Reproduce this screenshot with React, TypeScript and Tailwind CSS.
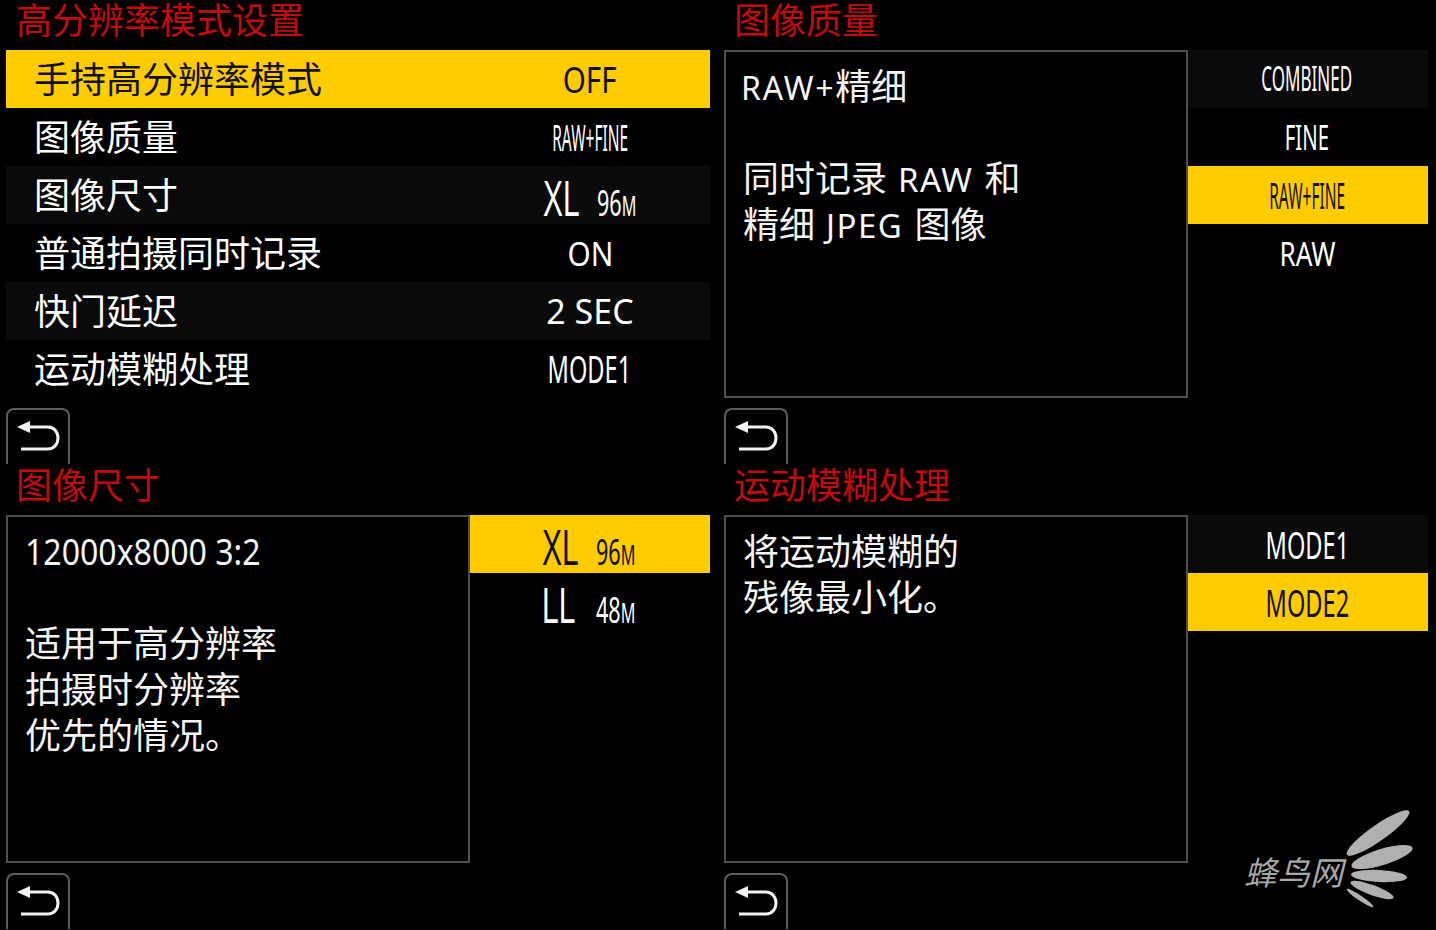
const cjk = "font-['Noto_Sans','Noto_Sans_CJK_SC',sans-serif]";
const titleFont = "font-['Liberation_Sans','Noto_Sans_CJK_SC',sans-serif]";

function BackButton() {
  return (
    <div className="mt-[10px] flex h-[56px] w-[64px] items-start justify-center rounded-t-lg border-2 border-b-0 border-[#5c5c5c] bg-black pt-[9px]">
      <svg width="46" height="34" viewBox="0 0 46 34" fill="none">
        <path d="M2 8 L15 2 L15 14 Z" fill="#f2f2f2" />
        <path d="M13 8 H33 C39 8 43 13 43 19 C43 25 39 30 33 30 H6" stroke="#f2f2f2" strokeWidth="3" />
      </svg>
    </div>
  );
}

// Camera UI text is condensed, so squeeze it horizontally
function Squeezed({ children, className }: { children: React.ReactNode; className: string }) {
  return <span className={`inline-block whitespace-nowrap ${className}`}>{children}</span>;
}

function SizeValue({ big, small }: { big: string; small: string }) {
  return (
    <span className="flex items-baseline justify-center pt-[7px]">
      <Squeezed className="w-[40px] origin-left scale-x-[0.6] font-['Liberation_Sans',sans-serif] text-[50px] leading-none">
        {big}
      </Squeezed>
      <Squeezed className="ml-[14px] w-[40px] origin-left scale-x-[0.6] text-[36px] leading-none">
        {small.slice(0, 2)}
        <span className="text-[27px]">{small.slice(2)}</span>
      </Squeezed>
    </span>
  );
}

type Row = { label: string; value: React.ReactNode };

const rows: Row[] = [
  { label: "手持高分辨率模式", value: <Squeezed className="-translate-y-px scale-x-[0.8] text-[37px]">OFF</Squeezed> },
  { label: "图像质量", value: <Squeezed className="scale-x-[0.43] text-[36px]">RAW+FINE</Squeezed> },
  { label: "图像尺寸", value: <SizeValue big="XL" small="96M" /> },
  { label: "普通拍摄同时记录", value: <Squeezed className="scale-x-[0.9] text-[33px]">ON</Squeezed> },
  { label: "快门延迟", value: <Squeezed className="text-[34px]">2 SEC</Squeezed> },
  { label: "运动模糊处理", value: <Squeezed className="-translate-x-px -translate-y-px scale-x-[0.62] text-[38px]">MODE1</Squeezed> },
];

function SettingsPanel() {
  return (
    <section className="flex h-[465px] w-[704px] flex-col">
      <h2 className={`h-[50px] pl-[10px] text-[36px] leading-[44px] text-[#c40a0a] ${titleFont}`}>高分辨率模式设置</h2>
      <div className="flex flex-col">
        {rows.map((row, i) => (
          <div
            key={row.label}
            className={`flex h-[58px] items-center ${i === 0 ? "bg-[#ffcc00] text-[#111]" : i % 2 === 0 ? "bg-[#0a0a0a] text-white" : "bg-black text-white"}`}
          >
            <span className="w-[504px] pl-[28px] pt-[2px] text-[36px] leading-none">{row.label}</span>
            <span className="flex w-[160px] justify-center pt-[1px]">{row.value}</span>
          </div>
        ))}
      </div>
      <BackButton />
    </section>
  );
}

type Option = { key: string; node: React.ReactNode; active?: boolean; tint?: boolean };

function DetailPanel({ title, lines, options }: { title: string; lines: React.ReactNode[]; options: Option[] }) {
  return (
    <section className="flex h-[465px] w-[704px] flex-col">
      <h2 className={`h-[50px] pl-[10px] text-[36px] leading-[44px] text-[#c40a0a] ${titleFont}`}>{title}</h2>
      <div className="flex h-[348px]">
        <div className="w-[464px] border-2 border-[#4f4f4f] px-[17px] pt-[12px] text-[36px] leading-[46px] text-[#f5f5f5]">
          {lines.map((line, i) => (
            <div key={i} className="h-[46px] whitespace-nowrap">
              {line}
            </div>
          ))}
        </div>
        <div className="flex w-[240px] flex-col">
          {options.map((o) => (
            <div
              key={o.key}
              className={`flex h-[58px] items-center justify-center pr-[2px] ${o.active ? "bg-[#ffcc00] text-[#111]" : o.tint ? "bg-[#0a0a0a] text-white" : "text-white"}`}
            >
              {o.node}
            </div>
          ))}
        </div>
      </div>
      <BackButton />
    </section>
  );
}

function Latin({ children }: { children: React.ReactNode }) {
  return <span className="mx-[11px] text-[33px] tracking-[1.5px]">{children}</span>;
}

function Watermark() {
  const wings = [
    { cx: 1378, cy: 833, rx: 38, ry: 8, r: -35 },
    { cx: 1382, cy: 857, rx: 32, ry: 8, r: -17 },
    { cx: 1379, cy: 876, rx: 28, ry: 6, r: 3 },
    { cx: 1372, cy: 890, rx: 23, ry: 5, r: 20 },
    { cx: 1360, cy: 898, rx: 16, ry: 2.5, r: 34 },
  ];
  return (
    <div className="absolute left-[1230px] top-[800px] h-[130px] w-[206px]">
      <span className="absolute left-[14px] top-[51px] text-[33px] italic leading-[44px] text-[#a8a8a8]">蜂鸟网</span>
      <svg width="206" height="130" viewBox="1230 800 206 130" className="absolute inset-0">
        {wings.map((w) => (
          <ellipse key={w.cy} cx={w.cx} cy={w.cy} rx={w.rx} ry={w.ry} fill="#b0b0b0" transform={`rotate(${w.r} ${w.cx} ${w.cy})`} />
        ))}
      </svg>
    </div>
  );
}

export default function App() {
  return (
    <div className={`relative h-[930px] w-[1436px] overflow-hidden bg-black ${cjk}`}>
      <div className="grid grid-cols-[704px_704px] gap-x-[14px] pl-[6px]">
        <SettingsPanel />
        <DetailPanel
          title="图像质量"
          lines={[
            <>
              <span className="-ml-[2px] text-[32px] tracking-[1.8px]">RAW+</span>精细
            </>,
            "",
            <>
              同时记录<Latin>RAW</Latin>和
            </>,
            <>
              精细<Latin>JPEG</Latin>图像
            </>,
          ]}
          options={[
            { key: "c", tint: true, node: <Squeezed className="-translate-y-px scale-x-[0.5] text-[34px]">COMBINED</Squeezed> },
            { key: "f", node: <Squeezed className="scale-x-[0.6] text-[34px]">FINE</Squeezed> },
            { key: "rf", active: true, node: <Squeezed className="translate-y-px scale-x-[0.43] text-[36px]">RAW+FINE</Squeezed> },
            { key: "r", node: <Squeezed className="translate-y-px scale-x-[0.79] text-[33px]">RAW</Squeezed> },
          ]}
        />
        <DetailPanel
          title="图像尺寸"
          lines={[
            <Squeezed className="origin-left scale-x-[0.89]">12000x8000 3:2</Squeezed>,
            "",
            "适用于高分辨率",
            "拍摄时分辨率",
            "优先的情况。",
          ]}
          options={[
            { key: "xl", active: true, node: <SizeValue big="XL" small="96M" /> },
            { key: "ll", node: <SizeValue big="LL" small="48M" /> },
          ]}
        />
        <DetailPanel
          title="运动模糊处理"
          lines={["将运动模糊的", "残像最小化。"]}
          options={[
            { key: "m1", tint: true, node: <Squeezed className="scale-x-[0.62] text-[38px]">MODE1</Squeezed> },
            { key: "m2", active: true, node: <Squeezed className="scale-x-[0.62] text-[38px]">MODE2</Squeezed> },
          ]}
        />
      </div>
      <Watermark />
    </div>
  );
}
